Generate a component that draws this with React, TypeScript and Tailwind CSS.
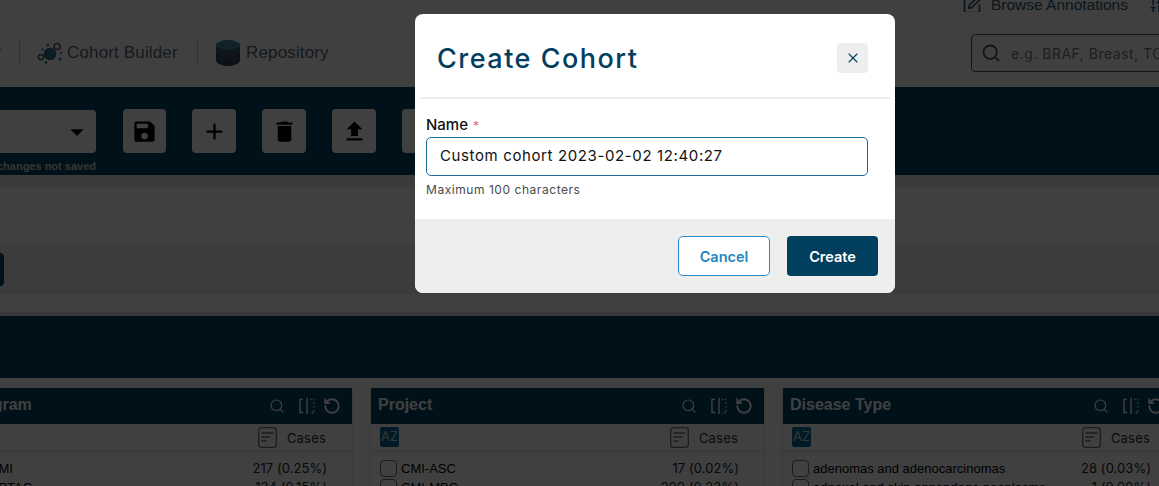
import React from 'react';
import { MdSave, MdAdd, MdDelete, MdFileUpload, MdArrowDropDown } from 'react-icons/md';
import { Search, RotateCcw, X, SquarePen, SlidersVertical } from 'lucide-react';

const arial = 'font-["Liberation_Sans",Arial,sans-serif]';

function CohortIcon() {
  return (
    <svg width="26" height="26" viewBox="0 0 26 26" fill="none">
      <circle cx="13" cy="14" r="5.5" fill="#1f7ea8" stroke="#4b5563" strokeWidth="1.5" />
      <circle cx="20" cy="6.5" r="3" stroke="#4b5563" strokeWidth="1.5" />
      <circle cx="4" cy="17" r="2.6" stroke="#4b5563" strokeWidth="1.5" />
      <circle cx="11" cy="5" r="1.3" fill="#1f7ea8" />
      <circle cx="24" cy="13" r="1.2" fill="#1f7ea8" />
      <circle cx="23" cy="19" r="1.4" fill="#1f7ea8" />
      <circle cx="9" cy="22.5" r="1.4" fill="#1f7ea8" />
      <circle cx="5.5" cy="9.5" r="1" fill="#4b5563" />
    </svg>
  );
}

function DatabaseIcon() {
  return (
    <svg width="24" height="26" viewBox="0 0 24 26">
      <path d="M0 20v-15h24v15c0 3.500-5.500 6-12 6s-12-2.500-12-6z" fill="#2d4658" />
      <path d="M0 13v-8h24v8c0 3-5.500 5-12 5s-12-2-12-5z" fill="#3a5568" />
      <ellipse cx="12" cy="5" rx="12" ry="5" fill="#3f83a5" />
    </svg>
  );
}

function FlipIcon() {
  return (
    <svg width="18" height="18" viewBox="0 0 18 18" fill="none" stroke="currentColor" strokeWidth="1.4">
      <path d="M5 2.500H2v13h3" />
      <path d="M9 1v16" />
      <path d="M12 2.500h4M16 5v2M16 9v2M16 13v2.500h-4" strokeDasharray="1.500 1.500" />
    </svg>
  );
}

function SortIcon() {
  return (
    <svg width="19" height="21" viewBox="0 0 19 21" fill="none" stroke="#6b7280" strokeWidth="1.3">
      <rect x="0.700" y="0.700" width="17.600" height="19.600" rx="2.500" />
      <path d="M3.500 6h12M3.500 10h9M3.500 14h5" strokeWidth="1.500" />
    </svg>
  );
}

function ToolButton({ children, className = 'w-[44px]' }: { children: React.ReactNode; className?: string }) {
  return (
    <div className={`flex h-[44px] items-center justify-center rounded-[4px] bg-white text-[27px] text-black ${className}`}>
      {children}
    </div>
  );
}

function Row({ label, value }: { label: string; value: string }) {
  return (
    <div className="flex h-[19px] items-center justify-between pl-[9px] pr-[25px]">
      <div className="flex items-center gap-[4px]">
        <span className="h-[17px] w-[17px] rounded-[4px] border border-[#6b7280] bg-white" />
        <span className={`${arial} text-[13px] text-black`}>{label}</span>
      </div>
      <span className="text-[13px] tracking-[0.05px] text-[#222]">{value}</span>
    </div>
  );
}

function FacetPanel({ title, rows }: { title: string; rows: [string, string][] }) {
  return (
    <div className="h-[120px] w-[393px] shrink-0 bg-white shadow-[0_1px_3px_rgba(0,0,0,0.2)]">
      <div className="flex h-[36px] items-center justify-between bg-[#004468] pl-[7px] pr-[11px] text-white">
        <span className={`${arial} -mt-[2px] text-[16px] font-bold`}>{title}</span>
        <div className="flex items-center">
          <Search size={16} strokeWidth={1.800} />
          <span className="ml-[13px] mr-[7px]">
            <FlipIcon />
          </span>
          <RotateCcw size={18} strokeWidth={2.400} />
        </div>
      </div>
      <div className="flex h-[28px] items-center justify-between border-b-2 border-[#f0f0f0] pl-[9px] pr-[26px]">
        <span className="flex h-[20px] w-[19px] items-center justify-center rounded-[2px] bg-[#0b6a94] text-[13px] text-[#cbd5db]">AZ</span>
        <div className="flex items-center gap-[10px]">
          <SortIcon />
          <span className="mt-[3px] text-[13px] tracking-[0.2px] text-[#333]">Cases</span>
        </div>
      </div>
      <div className="flex flex-col pt-[7px]">
        {rows.map(([label, value]) => (
          <Row key={label} label={label} value={value} />
        ))}
      </div>
    </div>
  );
}

function Page() {
  return (
    <div className="flex h-full flex-col">
      <header className="flex h-[87px] shrink-0 flex-col bg-white">
        <div className={`${arial} flex h-[12px] items-end justify-end gap-[21px] overflow-hidden text-[15.500px] text-[#2b5a78]`}>
          <div className="-mb-[4px] flex items-center gap-[9px] leading-[22px]">
            <SquarePen size={20} />
            <span>Browse Annotations</span>
          </div>
          <div className="-mb-[4px] -mr-[10px]">
            <SlidersVertical size={20} />
          </div>
        </div>
        <div className="mt-[15px] flex h-[52px] items-center justify-between">
          <nav className={`${arial} flex items-center text-[17px] tracking-[0.15px] text-[#5b6670]`}>
            <span className="-ml-[120px] mr-[18px] w-[121px] whitespace-nowrap text-right">Analysis Center</span>
            <div className="flex h-[26px] w-[178px] items-center gap-[4px] border-l border-[#c9c9c9] pl-[17px]">
              <CohortIcon />
              <span>Cohort Builder</span>
            </div>
            <div className="flex h-[26px] items-center gap-[6px] border-l border-[#c9c9c9] pl-[18px]">
              <DatabaseIcon />
              <span>Repository</span>
            </div>
          </nav>
          <div className="-mr-[40px] flex h-[38px] w-[228px] items-center gap-[10px] overflow-hidden rounded-[4px] border border-[#555] pl-[9px]">
            <Search size={20} className="shrink-0 text-[#555]" strokeWidth={2.200} />
            <span className="text-[14px] tracking-[0.5px] whitespace-nowrap text-[#777]">e.g. BRAF, Breast, TCGA-BRCA</span>
          </div>
        </div>
      </header>

      <section className="flex h-[88px] shrink-0 items-start bg-[#004468] pt-[23px]">
        <div className="flex flex-col">
          <div className="flex h-[43px] w-[96px] items-center justify-end rounded-r-[4px] bg-white pr-[3px] text-[32px] text-black">
            <MdArrowDropDown />
          </div>
          <div className="mt-[5px] flex w-[96px] justify-end overflow-hidden">
            <span className={`${arial} shrink-0 text-[11px] font-bold whitespace-nowrap text-[#d4d4d4]`}>changes not saved</span>
          </div>
        </div>
        <div className="-mt-[1px] ml-[27px] flex gap-[26px]">
          <ToolButton className="w-[43px]"><MdSave /></ToolButton>
          <ToolButton><MdAdd /></ToolButton>
          <ToolButton><MdDelete /></ToolButton>
          <ToolButton><MdFileUpload /></ToolButton>
          <ToolButton><MdFileUpload /></ToolButton>
        </div>
      </section>

      <div className="h-[13px] shrink-0 bg-[#ebebeb]" />
      <div className="h-[56px] shrink-0 bg-white" />
      <div className="flex h-[50px] shrink-0 items-center bg-[#f0f0f0]">
        <div className="h-[33px] w-[4px] rounded-r-[4px] bg-[#004468]" />
      </div>
      <div className="h-[18px] shrink-0 bg-white" />
      <div className="h-[4px] shrink-0 bg-[#e2e2e2]" />
      <div className="h-[62px] shrink-0 bg-[#004468]" />

      <div className="-ml-[41px] flex gap-[19px] bg-white pt-[10px]">
        <FacetPanel title="Program" rows={[['CMI', '217 (0.25%)'], ['CPTAC', '134 (0.15%)']]} />
        <FacetPanel title="Project" rows={[['CMI-ASC', '17 (0.02%)'], ['CMI-MBC', '200 (0.23%)']]} />
        <FacetPanel title="Disease Type" rows={[['adenomas and adenocarcinomas', '28 (0.03%)'], ['adnexal and skin appendage neoplasms', '1 (0.00%)']]} />
      </div>
    </div>
  );
}

function CreateCohortModal() {
  return (
    <div className="absolute left-[415px] top-[14px] flex h-[279px] w-[480px] flex-col overflow-hidden rounded-[8px] bg-white">
      <div className="mx-[5px] flex h-[85px] shrink-0 items-center justify-between border-b-2 border-[#eeeeee] pl-[17px] pr-[22px] pt-[5px]">
        <h2 className="mt-[3px] text-[27px] font-medium tracking-[1.5px] text-[#023e5e]">Create Cohort</h2>
        <button className="flex h-[30px] w-[31px] items-center justify-center rounded-[4px] bg-[#eeeeee] text-[#023e5e]">
          <X size={16} strokeWidth={1.600} />
        </button>
      </div>
      <div className="flex flex-1 flex-col pl-[11px] pr-[27px] pt-[17px]">
        <label className="text-[15px] leading-[17px] font-medium text-[#111]">
          Name <span className="ml-[1px] text-[12px] font-normal text-[#f0616d]">*</span>
        </label>
        <div className="mt-[3px] flex h-[39px] items-center rounded-[5px] border border-[#1c6a9a] pl-[13px] text-[15px] tracking-[0.62px] text-[#111]">
          Custom cohort 2023-02-02 12:40:27
        </div>
        <p className="mt-[6px] text-[12px] leading-[15px] tracking-[0.55px] text-[#4a4a4a]">Maximum 100 characters</p>
      </div>
      <div className="flex h-[74px] shrink-0 items-center justify-end gap-[17px] bg-[#eeeeee] pr-[17px]">
        <button className="h-[40px] w-[92px] rounded-[5px] border border-[#2a8ac7] bg-white pt-[1px] text-[14.500px] font-semibold text-[#1f86c2]">Cancel</button>
        <button className="h-[40px] w-[91px] rounded-[4px] bg-[#023e5e] pt-[1px] text-[14.500px] font-semibold text-white">Create</button>
      </div>
    </div>
  );
}

export default function App() {
  return (
    <div className="relative h-[486px] w-[1159px] overflow-hidden bg-white font-['Inter',sans-serif]">
      <Page />
      <div className="absolute inset-0 bg-black/75" />
      <CreateCohortModal />
    </div>
  );
}
